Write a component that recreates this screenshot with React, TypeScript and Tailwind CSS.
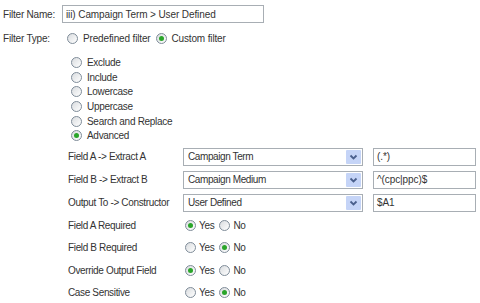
import React from "react";

const font = { fontFamily: '"Liberation Sans", Arial, sans-serif' };

function Radio({ checked }: { checked?: boolean }) {
  return (
    <span className="relative flex w-[11px] h-[11px] shrink-0 items-center justify-center rounded-full border border-[#7f8c99] bg-gradient-to-br from-[#d9dcdf] to-white">
      {checked && <span className="w-[5px] h-[5px] rounded-full bg-[#2aa52a]" />}
    </span>
  );
}

function Select({ value }: { value: string }) {
  return (
    <div className="flex h-[18px] w-[180px] items-stretch border border-[#a8aeb4] bg-white">
      <div className="flex flex-1 items-center pl-[4px] text-[10px] tracking-[-0.4px] text-[#333]">{value}</div>
      <div className="m-[1px] flex w-[15px] items-center justify-center rounded-[1px] bg-[#c5d4f7]">
        <svg width="9" height="6" viewBox="0 0 9 6">
          <polyline points="1.5,1.5 4.5,4.5 7.5,1.5" fill="none" stroke="#4a5f8c" strokeWidth="1.8" />
        </svg>
      </div>
    </div>
  );
}

function TextBox({ value, w }: { value: string; w: string }) {
  return (
    <div className={`flex h-[18px] ${w} items-center border border-[#a8aeb4] bg-white pl-[3px] text-[10px] tracking-[-0.1px] text-[#333]`}>
      {value}
    </div>
  );
}

function YesNo({ yes }: { yes: boolean }) {
  return (
    <div className="flex items-center">
      <Radio checked={yes} />
      <span className="ml-[3px] text-[10px] tracking-[-0.3px]">Yes</span>
      <span className="ml-[5px] flex items-center"><Radio checked={!yes} /></span>
      <span className="ml-[3px] text-[10px] tracking-[-0.3px]">No</span>
    </div>
  );
}

export default function App() {
  const options = ["Exclude", "Include", "Lowercase", "Uppercase", "Search and Replace", "Advanced"];
  return (
    <div className="w-[480px] h-[303px] bg-white text-[#333] overflow-hidden" style={font}>
      <div className="pt-[5px]">
        <div className="flex h-[18px] items-center">
          <div className="w-[62px] pl-[3px] text-[10px] tracking-[-0.2px]">Filter Name:</div>
          <TextBox value="iii) Campaign Term > User Defined" w="w-[202px]" />
        </div>
        <div className="mt-[7px] flex h-[16px] items-center">
          <div className="w-[62px] pl-[3px] text-[10px] tracking-[-0.2px]">Filter Type:</div>
          <div className="ml-[5px] flex items-center">
            <Radio />
            <span className="ml-[5px] text-[10px] tracking-[-0.15px]">Predefined filter</span>
            <span className="ml-[5px] flex items-center"><Radio checked /></span>
            <span className="ml-[5px] text-[10px] tracking-[-0.15px]">Custom filter</span>
          </div>
        </div>
        <div className="mt-[9px] pl-[71px]">
          {options.map((o, i) => (
            <div key={o} className="flex h-[14.7px] items-center">
              <Radio checked={i === 5} />
              <span className="ml-[5px] text-[10px] tracking-[-0.3px]">{o}</span>
            </div>
          ))}
        </div>
        <div className="mt-[2px] pl-[68px]">
          {[
            ["Field A -> Extract A", "Campaign Term", "(.*)"],
            ["Field B -> Extract B", "Campaign Medium", "^(cpc|ppc)$"],
            ["Output To -> Constructor", "User Defined", "$A1"],
          ].map(([l, s, t]) => (
            <div key={l} className="flex h-[23px] items-center">
              <div className="w-[115px] text-[10px] tracking-[-0.35px]">{l}</div>
              <Select value={s} />
              <div className="ml-[10px]"><TextBox value={t} w="w-[103px]" /></div>
            </div>
          ))}
          {[
            ["Field A Required", true],
            ["Field B Required", false],
            ["Override Output Field", true],
            ["Case Sensitive", false],
          ].map(([l, y]) => (
            <div key={l as string} className="flex h-[22.5px] items-center">
              <div className="w-[117px] text-[10px] tracking-[-0.35px]">{l as string}</div>
              <YesNo yes={y as boolean} />
            </div>
          ))}
        </div>
      </div>
    </div>
  );
}
